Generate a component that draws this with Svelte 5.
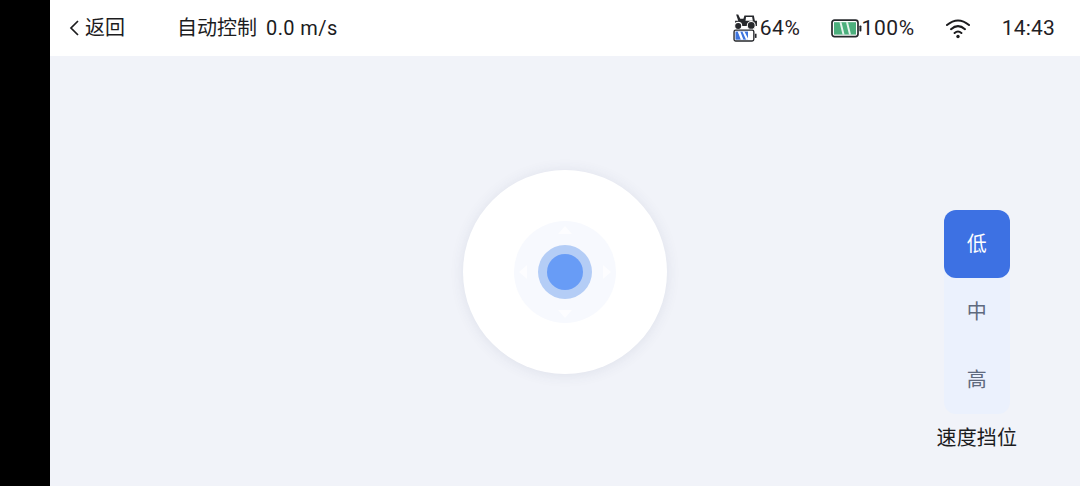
<script>
	const gears = ['低', '中', '高'];
	let gear = $state('低');
</script>

<div class="screen">
	<aside class="bezel"></aside>
	<div class="page">
		<header class="topbar">
			<button class="back">
				<svg width="12" height="18" viewBox="0 0 12 18"><path d="M10 2 L3 9 L10 16" fill="none" stroke="#1c1c1e" stroke-width="1.7" /></svg>
				<span>返回</span>
			</button>
			<div class="title">自动控制<span class="speed">0.0 m/s</span></div>
			<div class="status">
				<div class="stat vehicle">
					<svg width="25" height="30" viewBox="0 0 24 28">
						<path d="M3 1 H5 L7 5 H10 L11 2 H20 L21 7 H23 V12 H2 V7 H5 Z" fill="#26282c" />
						<path d="M12.5 3.4 H18.4 L19 7 H12 Z" fill="#fff" />
						<circle cx="5" cy="12" r="3.4" fill="#26282c" stroke="#fff" />
						<circle cx="17.5" cy="11.5" r="3.8" fill="#26282c" stroke="#fff" />
						<rect x="1" y="16" width="19" height="10.5" rx="1.6" fill="#fff" stroke="#26282c" stroke-width="1.3" />
						<rect x="21" y="19.5" width="1.6" height="4" fill="#26282c" />
						<rect x="2.4" y="17.4" width="12" height="7.8" fill="#3d74de" />
						<path d="M4.5 17.4 H7 L10 25.2 H7.5 Z M9 17.4 H11 L14.4 24 V25.2 H12.6 Z" fill="#fff" />
					</svg>
					<span>64%</span>
				</div>
				<div class="stat battery">
					<svg width="31" height="19" viewBox="0 0 31 19">
						<rect x="1" y="1.2" width="26" height="16.4" rx="2.5" fill="#fff" stroke="#26282c" stroke-width="1.7" />
						<rect x="28.4" y="6.5" width="2" height="6" rx="0.8" fill="#26282c" />
						<rect x="3" y="3.2" width="22" height="12.4" fill="#4caf7d" />
						<path d="M8.5 3.2 H10.5 L13.5 15.6 H11.5 Z M15 3.2 H17 L20 15.6 H18 Z" fill="#fff" opacity="0.85" />
					</svg>
					<span>100%</span>
				</div>
				<svg class="wifi" width="26" height="22" viewBox="0 0 26 22">
					<path d="M2 8 Q13 -1 24 8 M6 12.2 Q13 6 20 12.2 M9.6 16 Q13 13 16.4 16" fill="none" stroke="#1c1c1e" stroke-width="2" stroke-linecap="round" />
					<circle cx="13" cy="19.5" r="1.7" fill="#1c1c1e" />
				</svg>
				<time>14:43</time>
			</div>
		</header>
		<main class="content">
			<div class="spacer"></div>
			<div class="joystick">
				<div class="pad">
					<span class="arrow up"></span>
					<span class="arrow down"></span>
					<span class="arrow left"></span>
					<span class="arrow right"></span>
					<div class="ring"><div class="knob"></div></div>
				</div>
			</div>
			<div class="speed-panel">
				<div class="gears">
					{#each gears as g}
						<button class="gear" class:active={gear === g} onclick={() => (gear = g)}>{g}</button>
					{/each}
				</div>
				<div class="gear-label">速度挡位</div>
			</div>
		</main>
	</div>
</div>

<style>
	:global(body) {
		margin: 0;
		background: #000;
	}
	.screen {
		display: flex;
		width: 1080px;
		height: 486px;
		overflow: hidden;
		font-family: "Noto Sans CJK SC", "Noto Sans", sans-serif;
		color: #1c1c1e;
	}
	.bezel {
		width: 50px;
		flex: none;
		background: #000;
	}
	.page {
		flex: 1;
		display: flex;
		flex-direction: column;
		background: #f1f3f9;
	}
	.topbar {
		height: 56px;
		flex: none;
		display: flex;
		align-items: center;
		background: #fff;
		font-size: 20px;
	}
	.back {
		display: flex;
		align-items: center;
		gap: 5px;
		width: 127px;
		padding: 0 0 3px 18px;
		border: 0;
		background: none;
		font: inherit;
		color: inherit;
		box-sizing: border-box;
	}
	.back svg {
		margin-top: 3px;
	}
	.title {
		display: flex;
		align-items: baseline;
		gap: 9px;
		margin-bottom: 3px;
		font-size: 20px;
	}
	.speed {
		font-family: Roboto, sans-serif;
		letter-spacing: 0.4px;
	}
	.status {
		margin-left: auto;
		display: flex;
		align-items: center;
		padding-right: 25px;
		font-family: Roboto, sans-serif;
		font-size: 21px;
		letter-spacing: 0.6px;
		color: #1f2125;
	}
	.stat {
		display: flex;
		align-items: center;
	}
	.vehicle {
		gap: 2px;
		margin-right: 30px;
	}
	.battery {
		gap: 0;
		margin-right: 30px;
	}
	.wifi {
		margin-right: 31px;
	}
	time {
		letter-spacing: 0.2px;
	}
	.content {
		flex: 1;
		display: grid;
		grid-template-columns: 1fr auto 1fr;
		align-items: center;
	}
	.joystick {
		width: 204px;
		height: 204px;
		border-radius: 50%;
		background: #fff;
		box-shadow: 0 1px 14px rgba(60, 70, 110, 0.1);
		display: flex;
		align-items: center;
		justify-content: center;
		margin-top: 1px;
	}
	.pad {
		position: relative;
		width: 102px;
		height: 102px;
		border-radius: 50%;
		background: #f7f9fe;
		display: flex;
		align-items: center;
		justify-content: center;
	}
	.ring {
		width: 54px;
		height: 54px;
		border-radius: 50%;
		background: #b4cdf6;
		display: flex;
		align-items: center;
		justify-content: center;
	}
	.knob {
		width: 36px;
		height: 36px;
		border-radius: 50%;
		background: #689cf6;
	}
	.arrow {
		position: absolute;
		width: 0;
		height: 0;
		border: 7px solid transparent;
		opacity: 0.7;
	}
	.up {
		top: -2px;
		left: 44px;
		border-bottom: 8px solid #fff;
	}
	.down {
		bottom: -2px;
		left: 44px;
		border-top: 8px solid #fff;
	}
	.left {
		left: -2px;
		top: 44px;
		border-right: 8px solid #fff;
	}
	.right {
		right: -2px;
		top: 44px;
		border-left: 8px solid #fff;
	}
	.speed-panel {
		justify-self: end;
		align-self: start;
		margin: 154px 63px 0 0;
		display: flex;
		flex-direction: column;
		align-items: center;
	}
	.gears {
		width: 66px;
		display: flex;
		flex-direction: column;
		background: #ebf1fd;
		border-radius: 12px;
	}
	.gear {
		height: 68px;
		border: 0;
		padding: 0 0 4px;
		background: none;
		border-radius: 12px;
		font: inherit;
		font-size: 20px;
		color: #5f6a7e;
	}
	.gear.active {
		background: #3d71e3;
		color: #fff;
	}
	.gear-label {
		margin-top: 8px;
		font-size: 20px;
		line-height: 29px;
		letter-spacing: 0.1px;
		color: #1c1c1e;
	}
</style>
